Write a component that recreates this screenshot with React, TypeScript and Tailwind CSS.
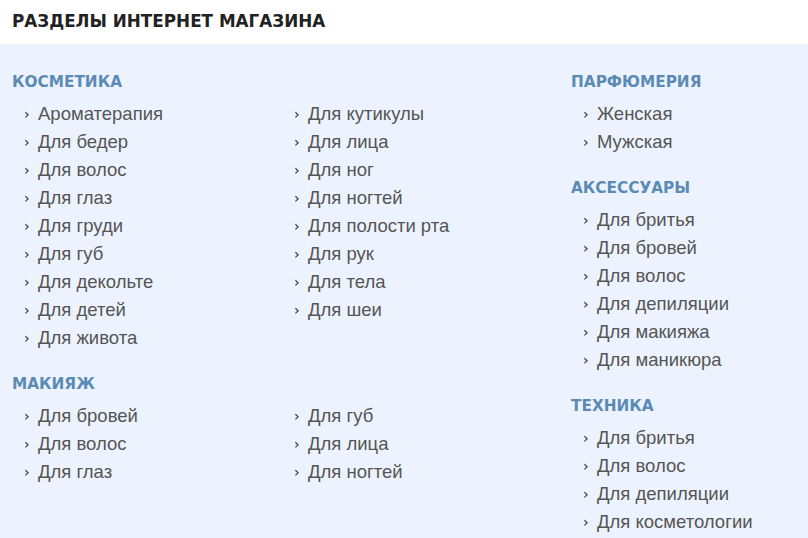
import React from "react";

type Section = { title: string; cols: string[][] };

const left: Section[] = [
  {
    title: "КОСМЕТИКА",
    cols: [
      ["Ароматерапия", "Для бедер", "Для волос", "Для глаз", "Для груди", "Для губ", "Для декольте", "Для детей", "Для живота"],
      ["Для кутикулы", "Для лица", "Для ног", "Для ногтей", "Для полости рта", "Для рук", "Для тела", "Для шеи"],
    ],
  },
  {
    title: "МАКИЯЖ",
    cols: [
      ["Для бровей", "Для волос", "Для глаз"],
      ["Для губ", "Для лица", "Для ногтей"],
    ],
  },
];

const right: Section[] = [
  { title: "ПАРФЮМЕРИЯ", cols: [["Женская", "Мужская"]] },
  { title: "АКСЕССУАРЫ", cols: [["Для бритья", "Для бровей", "Для волос", "Для депиляции", "Для макияжа", "Для маникюра"]] },
  { title: "ТЕХНИКА", cols: [["Для бритья", "Для волос", "Для депиляции", "Для косметологии"]] },
];

const Item: React.FC<{ label: string }> = ({ label }) => (
  <li className="flex items-center h-[28px]">
    <span className="w-[14px] text-[14px] text-[#222] font-['DejaVu_Sans',sans-serif]">›</span>
    <a className="text-[18.5px] text-[#555] font-['Liberation_Sans',Arial,sans-serif]">{label}</a>
  </li>
);

const Block: React.FC<{ s: Section }> = ({ s }) => (
  <div className="mb-[18px]">
    <h3 className="text-[15.3px] font-bold text-[#5b8bb4] h-[28px] leading-[28px] font-['DejaVu_Sans',sans-serif]">
      {s.title}
    </h3>
    <div className="flex pl-[12px] pt-[4px]">
      {s.cols.map((c, i) => (
        <ul key={i} className="w-[270px] shrink-0">
          {c.map((l, j) => (
            <Item key={j} label={l} />
          ))}
        </ul>
      ))}
    </div>
  </div>
);

export default function App() {
  return (
    <div className="w-[808px] h-[538px] overflow-hidden bg-white">
      <div className="h-[44px] flex items-center pl-[12px]">
        <h2 className="text-[16.8px] font-bold text-[#222] font-['DejaVu_Sans',sans-serif]">
          РАЗДЕЛЫ ИНТЕРНЕТ МАГАЗИНА
        </h2>
      </div>
      <div className="bg-[#edf3fe] h-[494px] flex pl-[12px] pt-[24px]">
        <div className="w-[559px] shrink-0">
          {left.map((s) => (
            <Block key={s.title} s={s} />
          ))}
        </div>
        <div className="flex-1 min-w-0">
          {right.map((s) => (
            <Block key={s.title} s={s} />
          ))}
        </div>
      </div>
    </div>
  );
}
